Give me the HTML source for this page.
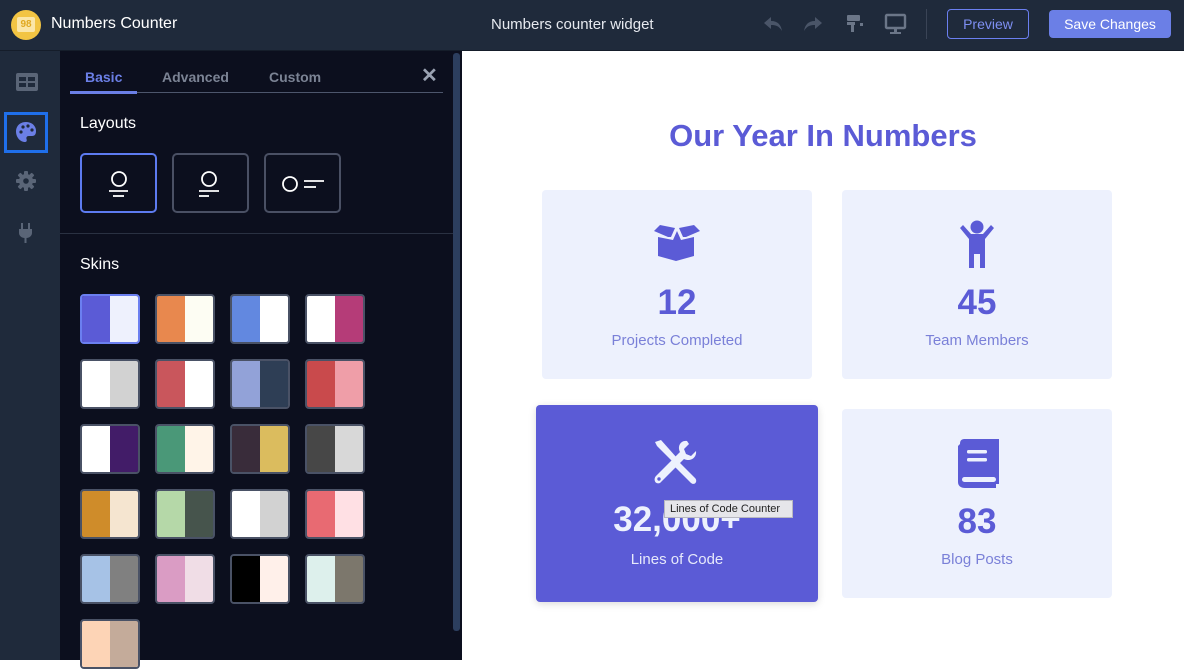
<!DOCTYPE html>
<html><head><meta charset="utf-8"><style>
*{box-sizing:border-box;margin:0;padding:0}
body{width:1184px;height:660px;overflow:hidden;font-family:"Liberation Sans",sans-serif;background:#fff;position:relative}
.top{position:absolute;left:0;top:0;width:1184px;height:51px;background:#1f2a3b;border-bottom:1px solid #151d2a}
.abs{position:absolute}
.rail{position:absolute;left:0;top:51px;width:60px;height:609px;background:#1f2a3b}
.panel{position:absolute;left:60px;top:51px;width:402px;height:609px;background:#0c0f1e}
.sw{position:absolute;width:60px;height:50px;border:2px solid #4a5266;border-radius:4px;overflow:hidden;display:flex}
.sw i{flex:1;display:block}
.lay{position:absolute;top:102px;width:77px;height:60px;border:2px solid #4a5064;border-radius:5px}
.card{position:absolute;background:#edf1fd;border-radius:4px;text-align:center;font-family:"Liberation Sans",sans-serif}
.num{position:absolute;left:0;right:0;font-size:35px;font-weight:bold;color:#5b5bd6}
.lbl{position:absolute;left:0;right:0;font-size:15px;color:#7a80d8}
</style></head><body>
<div class="top">
 <div class="abs" style="left:11px;top:10px;width:30px;height:30px;border-radius:50%;background:#f2c443"></div>
 <div class="abs" style="left:17px;top:17px;width:18px;height:15px;background:#fbe6a8;border-radius:2px;font-size:10px;color:#e0a820;font-weight:bold;text-align:center;line-height:15px">98</div>
 <div class="abs" style="left:51px;top:15px;color:#fff;font-size:16px">Numbers Counter</div>
 <div class="abs" style="left:491px;top:16px;color:#e6e9ef;font-size:15px">Numbers counter widget</div>
 <svg class="abs" style="left:762px;top:14px" width="22" height="20" viewBox="0 0 22 20"><path d="M9 3 L2 9 L9 15 V11 C14 11 17 12 20 17 C19 11 16 7 9 7Z" fill="#4a5568"/></svg>
 <svg class="abs" style="left:802px;top:14px" width="22" height="20" viewBox="0 0 22 20"><path d="M13 3 L20 9 L13 15 V11 C8 11 5 12 2 17 C3 11 6 7 13 7Z" fill="#4a5568"/></svg>
 <svg class="abs" style="left:845px;top:14px" width="20" height="20" viewBox="0 0 20 20"><rect x="2" y="1" width="13" height="6" rx="1" fill="#6b7688"/><rect x="2" y="8" width="8" height="3" fill="#6b7688"/><rect x="6" y="11" width="3" height="7" fill="#6b7688"/><rect x="15" y="9" width="3" height="3" fill="#6b7688"/></svg>
 <svg class="abs" style="left:884px;top:13px" width="24" height="22" viewBox="0 0 24 22"><rect x="2" y="2" width="19" height="13" rx="1" fill="none" stroke="#6b7688" stroke-width="2.4"/><rect x="10" y="15" width="3" height="4" fill="#6b7688"/><rect x="6" y="19" width="11" height="2" fill="#6b7688"/></svg>
 <div class="abs" style="left:926px;top:9px;width:1px;height:30px;background:#3a4456"></div>
 <div class="abs" style="left:947px;top:9px;width:82px;height:30px;border:1px solid #6b7ff0;border-radius:4px;color:#7e8ff2;font-size:14px;text-align:center;line-height:28px">Preview</div>
 <div class="abs" style="left:1049px;top:10px;width:122px;height:28px;background:#6b7fe6;border-radius:4px;color:#fff;font-size:14px;text-align:center;line-height:28px">Save Changes</div>
</div>
<div class="rail">
 <svg class="abs" style="left:16px;top:22px" width="22" height="18" viewBox="0 0 22 18"><rect x="0" y="0" width="22" height="18" rx="2" fill="#5a6577"/><rect x="3" y="4" width="7" height="4" fill="#1f2a3b"/><rect x="12" y="4" width="7" height="4" fill="#1f2a3b"/><rect x="3" y="10" width="7" height="4" fill="#1f2a3b"/><rect x="12" y="10" width="7" height="4" fill="#1f2a3b"/></svg>
 <div class="abs" style="left:4px;top:61px;width:44px;height:41px;border:3px solid #1f6fea"></div>
 <svg class="abs" style="left:15px;top:70px" width="22" height="22" viewBox="0 0 22 22"><path d="M11 1C5 1 1 5 1 10.5C1 16 5 21 10 21C12 21 12 19 11.5 18C11 16 12 15 14 15H17C20 15 21 13 21 10C21 5 17 1 11 1Z" fill="#6b7fe6"/><circle cx="6" cy="11" r="1.6" fill="#1f2a3b"/><circle cx="8" cy="6" r="1.6" fill="#1f2a3b"/><circle cx="13" cy="5" r="1.6" fill="#1f2a3b"/><circle cx="17" cy="9" r="1.6" fill="#1f2a3b"/></svg>
 <svg class="abs" style="left:16px;top:120px" width="20" height="20" viewBox="0 0 20 20"><g fill="#5a6577"><rect x="8" y="0" width="4" height="20" rx="1"/><rect x="8" y="0" width="4" height="20" rx="1" transform="rotate(45 10 10)"/><rect x="8" y="0" width="4" height="20" rx="1" transform="rotate(90 10 10)"/><rect x="8" y="0" width="4" height="20" rx="1" transform="rotate(135 10 10)"/><circle cx="10" cy="10" r="7"/></g><circle cx="10" cy="10" r="2.8" fill="#1f2a3b"/></svg>
 <svg class="abs" style="left:18px;top:172px" width="16" height="22" viewBox="0 0 16 22"><rect x="3" y="0" width="2" height="6" fill="#5a6577"/><rect x="10" y="0" width="2" height="6" fill="#5a6577"/><path d="M1 6H14V10C14 13 11 15 8.5 15V20H6.5V15C4 15 1 13 1 10Z" fill="#5a6577"/></svg>
</div>
<div class="panel">
 <div class="abs" style="left:25px;top:18px;font-size:14px;font-weight:bold;color:#6b7fe6">Basic</div>
 <div class="abs" style="left:102px;top:18px;font-size:14px;font-weight:bold;color:#7b8394">Advanced</div>
 <div class="abs" style="left:209px;top:18px;font-size:14px;font-weight:bold;color:#7b8394">Custom</div>
 <div class="abs" style="left:361px;top:12px;font-size:20px;font-weight:bold;color:#9aa2b2">✕</div>
 <div class="abs" style="left:10px;top:41px;width:373px;height:1px;background:#4d566c"></div>
 <div class="abs" style="left:10px;top:40px;width:67px;height:3px;background:#6b7fe6"></div>
 <div class="abs" style="left:20px;top:64px;font-size:16px;color:#fff">Layouts</div>
 <div class="lay" style="left:20px;border-color:#5d7bf0"><svg width="73" height="56" viewBox="0 0 73 56"><circle cx="37" cy="24" r="7" fill="none" stroke="#fff" stroke-width="1.8"/><line x1="27" y1="36" x2="46" y2="36" stroke="#fff" stroke-width="1.8"/><line x1="31" y1="41" x2="42" y2="41" stroke="#fff" stroke-width="1.8"/></svg></div>
 <div class="lay" style="left:112px"><svg width="73" height="56" viewBox="0 0 73 56"><circle cx="35" cy="24" r="7" fill="none" stroke="#fff" stroke-width="1.8"/><line x1="25" y1="36" x2="45" y2="36" stroke="#fff" stroke-width="1.8"/><line x1="25" y1="41" x2="35" y2="41" stroke="#fff" stroke-width="1.8"/></svg></div>
 <div class="lay" style="left:204px"><svg width="73" height="56" viewBox="0 0 73 56"><circle cx="24" cy="29" r="7" fill="none" stroke="#fff" stroke-width="1.8"/><line x1="38" y1="26" x2="58" y2="26" stroke="#fff" stroke-width="1.8"/><line x1="38" y1="32" x2="50" y2="32" stroke="#fff" stroke-width="1.8"/></svg></div>
 <div class="abs" style="left:0;top:182px;width:393px;height:1px;background:#2a3142"></div>
 <div class="abs" style="left:20px;top:205px;font-size:16px;color:#fff">Skins</div>
 <div class="abs" style="left:393px;top:2px;width:7px;height:578px;background:#2c3e5e;border-radius:3px"></div>
</div>
<div class="abs" style="left:462px;top:51px;width:722px;height:609px;background:#fff">
 <div class="abs" style="left:0;right:0;top:67px;text-align:center;font-size:31px;font-weight:bold;color:#5b5bd6">Our Year In Numbers</div>
</div>
<div class="card" style="left:542px;top:190px;width:270px;height:189px">
 <svg class="abs" style="left:110px;top:35px" width="50" height="38" viewBox="0 0 50 38"><path d="M2 6 L8 0 L23 3 L19 12 L16 12 Z" fill="#5b5bd6"/><path d="M48 6 L42 0 L27 3 L31 12 L34 12 Z" fill="#5b5bd6"/><path d="M25 6 L21 15 L6 12 L6 31 L24 36 L42 31 L42 12 L29 15 Z" fill="#5b5bd6"/></svg>
 <div class="num" style="top:93px">12</div><div class="lbl" style="top:142px">Projects Completed</div>
</div>
<div class="card" style="left:842px;top:190px;width:270px;height:189px">
 <svg class="abs" style="left:115px;top:28px" width="40" height="52" viewBox="0 0 40 52"><circle cx="20" cy="9" r="6.5" fill="#5b5bd6"/><path d="M3 10 L6 7 L14 16 H26 L34 7 L37 10 L28 21 V50 H23 V36 H17 V50 H12 V21 Z" fill="#5b5bd6"/><rect x="18.8" y="36" width="2.4" height="14" fill="#edf1fd"/></svg>
 <div class="num" style="top:93px">45</div><div class="lbl" style="top:142px">Team Members</div>
</div>
<div class="card" style="left:536px;top:405px;width:282px;height:197px;background:#5b5bd6;box-shadow:0 2px 8px rgba(0,0,0,.15)">
 <svg class="abs" style="left:115px;top:33px" width="52" height="52" viewBox="0 0 52 52"><path d="M4 4 L10 2 L26 20 L22 24 L6 8Z" fill="#edf1fd"/><path d="M26 22 L44 40 C47 43 44 48 40 45 L22 27Z" fill="#edf1fd"/><path d="M36 3 C30 2 26 8 29 14 L5 38 C2 41 4 47 9 45 L33 21 C39 24 46 20 45 13 L40 18 L35 16 L33 11 L38 6Z" fill="#edf1fd"/><circle cx="8" cy="41" r="1.7" fill="#5b5bd6"/></svg>
 <div class="num" style="top:95px;color:#edf1fd">32,000+</div><div class="lbl" style="top:146px;color:#e6e9fb">Lines of Code</div>
</div>
<div class="abs" style="left:664px;top:500px;width:129px;height:18px;background:#e6e6ea;border:1px solid #b8b8c0;font-size:11px;color:#222;line-height:16px;padding-left:5px">Lines of Code Counter</div>
<div class="card" style="left:842px;top:409px;width:270px;height:189px">
 <svg class="abs" style="left:113px;top:29px" width="46" height="52" viewBox="0 0 46 52"><path d="M5 6 C5 2 7 1 10 1 H44 V46 H41 V50 H10 C6 50 3 48 3 44 V8 Z" fill="#5b5bd6"/><rect x="12" y="12" width="20" height="3.5" rx="1.5" fill="#edf1fd"/><rect x="12" y="20" width="20" height="3.5" rx="1.5" fill="#edf1fd"/><rect x="7" y="39" width="34" height="5" rx="2.5" fill="#edf1fd"/></svg>
 <div class="num" style="top:93px">83</div><div class="lbl" style="top:142px">Blog Posts</div>
</div>
<div class="sw" style="left:80px;top:294px;border-color:#6b7ff0"><i style="background:#5b5bd6"></i><i style="background:#eef1fd"></i></div>
<div class="sw" style="left:155px;top:294px"><i style="background:#e8884e"></i><i style="background:#fdfdf3"></i></div>
<div class="sw" style="left:230px;top:294px"><i style="background:#6288e0"></i><i style="background:#fff"></i></div>
<div class="sw" style="left:305px;top:294px"><i style="background:#fff"></i><i style="background:#b53c78"></i></div>
<div class="sw" style="left:80px;top:359px"><i style="background:#fff"></i><i style="background:#d2d2d2"></i></div>
<div class="sw" style="left:155px;top:359px"><i style="background:#c9565c"></i><i style="background:#fff"></i></div>
<div class="sw" style="left:230px;top:359px"><i style="background:#92a2d8"></i><i style="background:#2e3e55"></i></div>
<div class="sw" style="left:305px;top:359px"><i style="background:#c94a4c"></i><i style="background:#ef9ea8"></i></div>
<div class="sw" style="left:80px;top:424px"><i style="background:#fff"></i><i style="background:#421c68"></i></div>
<div class="sw" style="left:155px;top:424px"><i style="background:#4a9878"></i><i style="background:#fff4e8"></i></div>
<div class="sw" style="left:230px;top:424px"><i style="background:#392c3a"></i><i style="background:#dbbc5e"></i></div>
<div class="sw" style="left:305px;top:424px"><i style="background:#474747"></i><i style="background:#d8d8d8"></i></div>
<div class="sw" style="left:80px;top:489px"><i style="background:#cf8c2a"></i><i style="background:#f5e5d0"></i></div>
<div class="sw" style="left:155px;top:489px"><i style="background:#b5d8a8"></i><i style="background:#46544c"></i></div>
<div class="sw" style="left:230px;top:489px"><i style="background:#fff"></i><i style="background:#d2d2d2"></i></div>
<div class="sw" style="left:305px;top:489px"><i style="background:#e86a72"></i><i style="background:#ffe0e4"></i></div>
<div class="sw" style="left:80px;top:554px"><i style="background:#a6c2e6"></i><i style="background:#808080"></i></div>
<div class="sw" style="left:155px;top:554px"><i style="background:#da9cc4"></i><i style="background:#f0dde6"></i></div>
<div class="sw" style="left:230px;top:554px"><i style="background:#000"></i><i style="background:#fff0ea"></i></div>
<div class="sw" style="left:305px;top:554px"><i style="background:#ddf0ec"></i><i style="background:#7c776c"></i></div>
<div class="sw" style="left:80px;top:619px"><i style="background:#fdd4b6"></i><i style="background:#c4ab9a"></i></div>
</body></html>
